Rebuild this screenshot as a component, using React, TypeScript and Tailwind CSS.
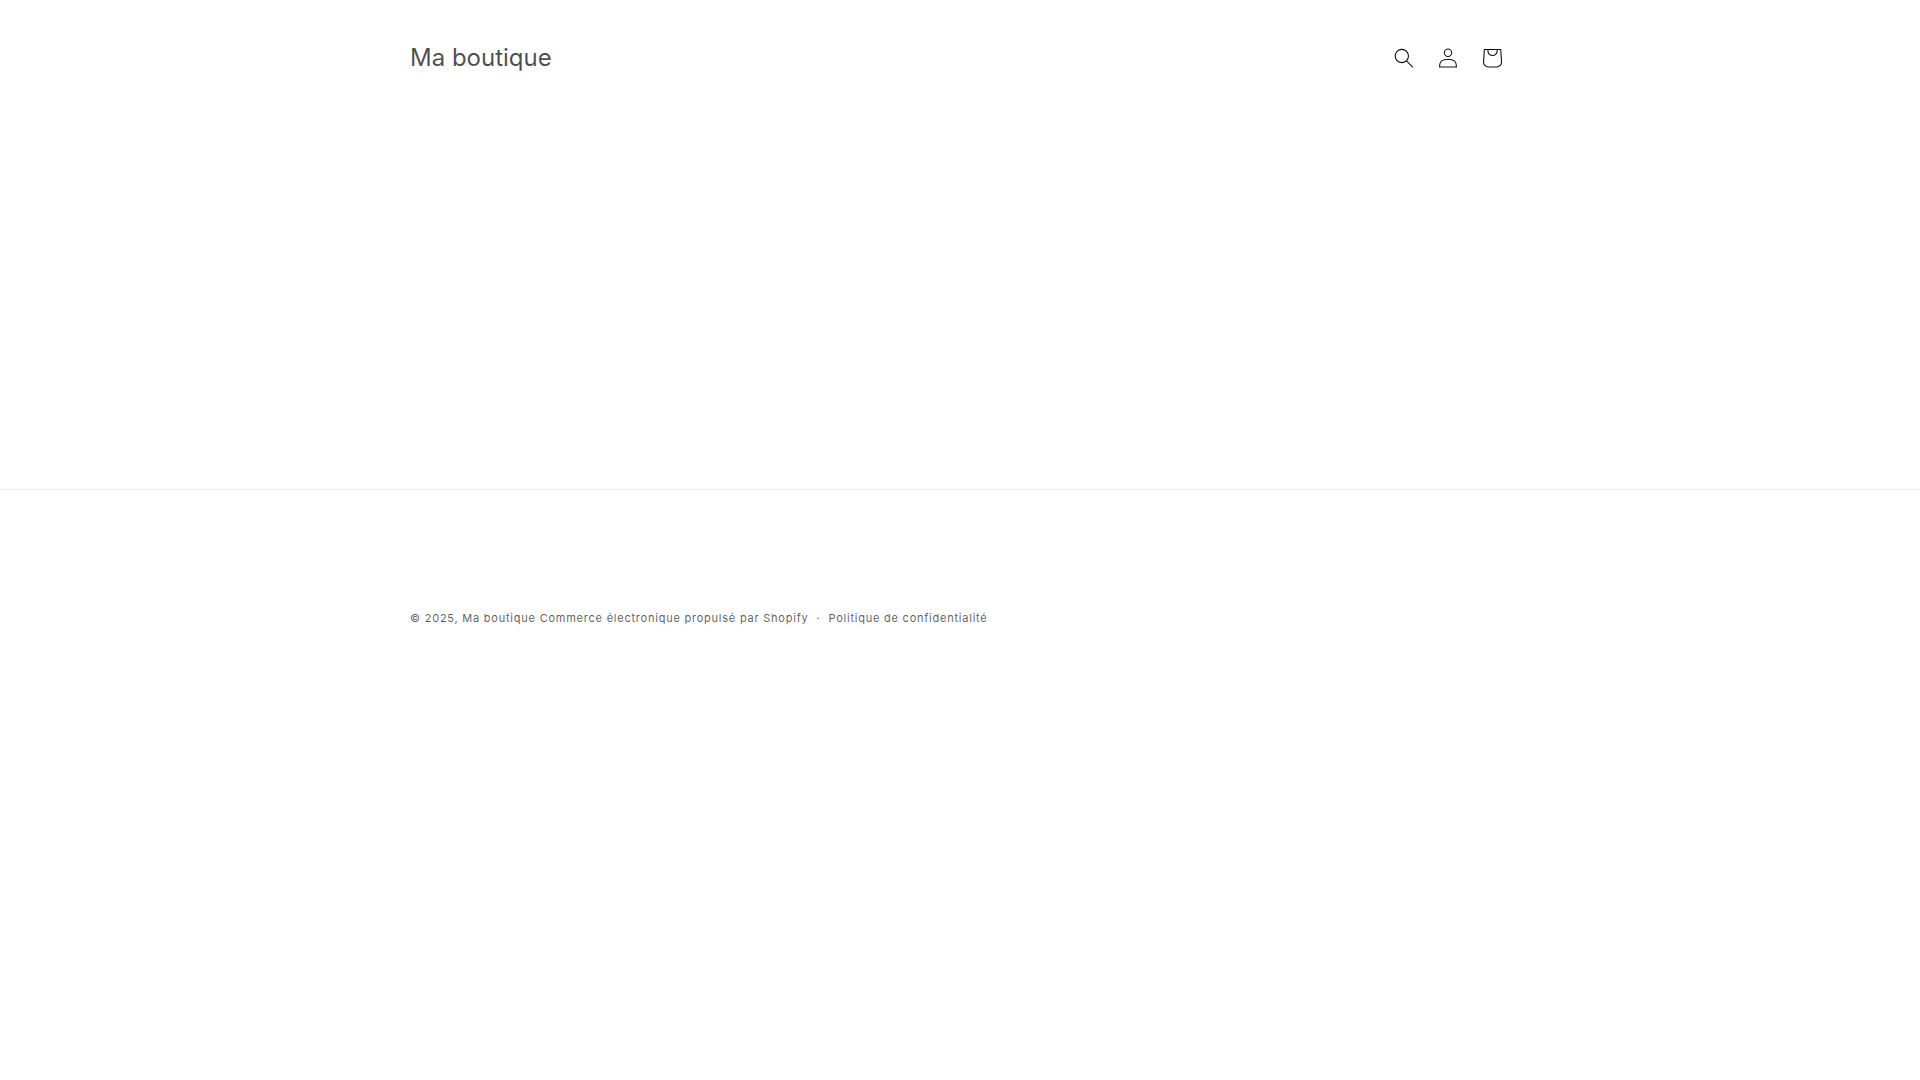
import React from "react";

const SearchIcon = () => (
	<svg viewBox="0 0 18 19" fill="none" className="size-5" aria-hidden="true">
		<path
			fillRule="evenodd"
			clipRule="evenodd"
			d="M11.03 11.68A5.784 5.784 0 112.85 3.5a5.784 5.784 0 018.18 8.18zm.26 1.12a6.78 6.78 0 11.72-.7l5.4 5.4a.5.5 0 11-.71.7l-5.41-5.4z"
			fill="currentColor"
		/>
	</svg>
);

const AccountIcon = () => (
	<svg viewBox="0 0 18 19" fill="none" className="size-5" aria-hidden="true">
		<path
			fillRule="evenodd"
			clipRule="evenodd"
			d="M6 4.5a3 3 0 116 0 3 3 0 01-6 0zm3-4a4 4 0 100 8 4 4 0 000-8zm5.58 12.15c1.12.82 1.83 2.24 1.91 4.85H1.51c.08-2.6.79-4.03 1.9-4.85C4.66 11.75 6.5 11.5 9 11.5s4.35.26 5.58 1.15zM9 10.5c-2.5 0-4.65.24-6.17 1.35C1.27 12.98.5 14.93.5 18v.5h17V18c0-3.07-.77-5.02-2.33-6.15-1.52-1.1-3.67-1.35-6.17-1.35z"
			fill="currentColor"
		/>
	</svg>
);

const CartIcon = () => (
	<svg viewBox="0 0 40 40" fill="none" className="size-11" aria-hidden="true">
		<path
			fillRule="evenodd"
			d="M15.75 11.8h-3.16l-.77 11.6a5 5 0 0 0 4.99 5.34h7.38a5 5 0 0 0 4.99-5.33l-.78-11.61zm0 1h-2.22l-.71 10.67a4 4 0 0 0 3.99 4.27h7.38a4 4 0 0 0 4-4.27l-.72-10.67h-2.22v.63a4.75 4.75 0 1 1-9.5 0zm8.5 0h-7.5v.63a3.75 3.75 0 1 0 7.5 0z"
			fill="currentColor"
		/>
	</svg>
);

const App = () => {
	return (
		<div className="min-h-screen bg-white font-['Inter',sans-serif] text-[#121212]/75">
			<header className="mx-auto flex w-full max-w-[1200px] items-center justify-between px-[50px] py-8">
				<h1>
					<a href="#" className="block py-2 text-2xl leading-9">
						Ma boutique
					</a>
				</h1>
				<div className="-mr-1 flex text-[#121212]">
					<button aria-label="Recherche" className="flex size-11 items-center justify-center">
						<SearchIcon />
					</button>
					<a href="#" aria-label="Connexion" className="flex size-11 items-center justify-center">
						<AccountIcon />
					</a>
					<a href="#" aria-label="Panier" className="flex size-11 items-center justify-center">
						<CartIcon />
					</a>
				</div>
			</header>

			<main className="min-h-[373px]" />

			<footer className="border-t border-[#121212]/8 pt-[120px]">
				<div className="mx-auto w-full max-w-[1200px] px-[50px] text-[11px] leading-4 tracking-[0.07em] text-[#121212]/70">
					<small className="text-[11px]">
						© 2025, <a href="#">Ma boutique</a> <a href="#">Commerce électronique propulsé par Shopify</a>
					</small>
					<span className="px-2">·</span>
					<a href="#">Politique de confidentialité</a>
				</div>
			</footer>
		</div>
	);
};

export default App;
